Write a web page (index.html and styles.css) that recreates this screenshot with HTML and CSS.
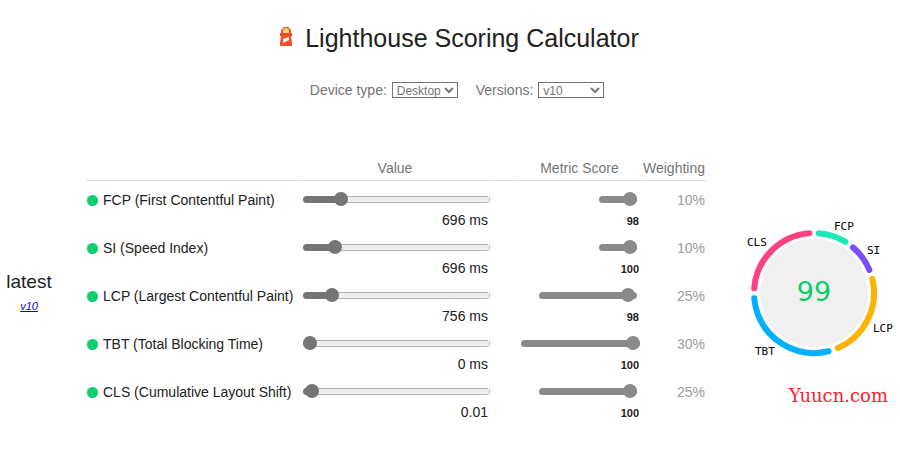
FILE: index.html
```
<!DOCTYPE html>
<html lang="en">

<head>
    <meta charset="UTF-8">
    <meta name="viewport" content="width=device-width, initial-scale=1.0">
    <title>Lighthouse Scoring Calculator</title>
    <link rel="stylesheet" href="styles.css">
</head>

<body>
    <header class="header">
        <svg class="logo" viewBox="0 0 14 20" aria-hidden="true">
            <path fill="#f4512c" d="M2 7V4l3-3h4l3 3v3h1v3h-1l1 7v3H1v-3l1-7H1V7z" />
            <path fill="#f8d66d" d="M4 7V5a3 3 0 0 1 6 0v2z" />
            <path fill="#fff" d="M4 13l6-2v3l-6 3z" />
            <path fill="#d93f22" d="M1 8h12v1H1z" />
        </svg>
        <h1 class="title">Lighthouse Scoring Calculator</h1>
    </header>

    <form class="controls">
        <label>Device type:
            <select class="select" name="device">
                <option>Mobile</option>
                <option selected>Desktop</option>
            </select>
        </label>
        <label>Versions:
            <select class="select" name="version">
                <option selected>v10</option>
                <option>v8</option>
                <option>v6</option>
            </select>
        </label>
    </form>

    <main class="main">
        <section class="version">
            <h2 class="version-title">latest</h2>
            <a class="version-link" href="#v10">v10</a>
        </section>

        <table class="metrics">
            <thead>
                <tr>
                    <th class="col-name"></th>
                    <th class="col-value">Value</th>
                    <th class="col-gap"></th>
                    <th class="col-score">Metric Score</th>
                    <th class="col-weight">Weighting</th>
                </tr>
            </thead>
            <tbody>
                <tr>
                    <td><span class="dot"></span><label for="fcp">FCP (First Contentful Paint)</label></td>
                    <td>
                        <input class="range" style="--fill: 20%" type="range" id="fcp" min="0" max="1000" value="177">
                        <output class="value" for="fcp">696 ms</output>
                    </td>
                    <td></td>
                    <td class="score">
                        <input class="range small" type="range" aria-label="FCP score" value="98" disabled>
                        <output class="score-value">98</output>
                    </td>
                    <td class="weight">10%</td>
                </tr>
                <tr>
                    <td><span class="dot"></span><label for="si">SI (Speed Index)</label></td>
                    <td>
                        <input class="range" style="--fill: 17%" type="range" id="si" min="0" max="1000" value="142">
                        <output class="value" for="si">696 ms</output>
                    </td>
                    <td></td>
                    <td class="score">
                        <input class="range small" type="range" aria-label="SI score" value="100" disabled>
                        <output class="score-value">100</output>
                    </td>
                    <td class="weight">10%</td>
                </tr>
                <tr>
                    <td><span class="dot"></span><label for="lcp">LCP (Largest Contentful Paint)</label></td>
                    <td>
                        <input class="range" style="--fill: 16%" type="range" id="lcp" min="0" max="1000" value="127">
                        <output class="value" for="lcp">756 ms</output>
                    </td>
                    <td></td>
                    <td class="score">
                        <input class="range medium" type="range" aria-label="LCP score" value="98" disabled>
                        <output class="score-value">98</output>
                    </td>
                    <td class="weight">25%</td>
                </tr>
                <tr>
                    <td><span class="dot"></span><label for="tbt">TBT (Total Blocking Time)</label></td>
                    <td>
                        <input class="range" style="--fill: 3%" type="range" id="tbt" min="0" max="1000" value="0">
                        <output class="value" for="tbt">0 ms</output>
                    </td>
                    <td></td>
                    <td class="score">
                        <input class="range large" type="range" aria-label="TBT score" value="100" disabled>
                        <output class="score-value">100</output>
                    </td>
                    <td class="weight">30%</td>
                </tr>
                <tr>
                    <td><span class="dot"></span><label for="cls">CLS (Cumulative Layout Shift)</label></td>
                    <td>
                        <input class="range" style="--fill: 4%" type="range" id="cls" min="0" max="1000" value="13">
                        <output class="value" for="cls">0.01</output>
                    </td>
                    <td></td>
                    <td class="score">
                        <input class="range medium" type="range" aria-label="CLS score" value="100" disabled>
                        <output class="score-value">100</output>
                    </td>
                    <td class="weight">25%</td>
                </tr>
            </tbody>
        </table>

        <!-- arcs are drawn in degrees: dash length is the arc, rotate is its start -->
        <svg class="gauge" viewBox="-74 -74 160 148" role="img" aria-label="Score 99">
            <circle r="54" fill="#f0f0f0" />
            <g class="arcs">
                <circle r="60" pathLength="360" stroke="#1de9b6" stroke-dasharray="27 333" transform="rotate(-85.5)" />
                <circle r="60" pathLength="360" stroke="#7c4dff" stroke-dasharray="27 333" transform="rotate(-49.5)" />
                <circle r="60" pathLength="360" stroke="#ffb300" stroke-dasharray="80 280" transform="rotate(-13.5)" />
                <circle r="60" pathLength="360" stroke="#00b0ff" stroke-dasharray="99 261" transform="rotate(76)" />
                <circle r="60" pathLength="360" stroke="#ff4081" stroke-dasharray="81 279" transform="rotate(184.5)" />
            </g>
            <text class="arc-label" x="20" y="-63">FCP</text>
            <text class="arc-label" x="53" y="-39">SI</text>
            <text class="arc-label" x="59" y="39">LCP</text>
            <text class="arc-label" x="-59" y="62">TBT</text>
            <text class="arc-label" x="-67" y="-47">CLS</text>
            <text class="total" x="0" y="8">99</text>
        </svg>
    </main>

    <div class="watermark">Yuucn.com</div>
</body>

</html>
```

FILE: styles.css
```
body {
    margin: 0;
    font-family: "Liberation Sans", Arial, sans-serif;
    font-size: 14px;
    line-height: 16px;
    color: #212121;
    background-color: #fff;
}

.header {
    display: flex;
    justify-content: center;
    align-items: center;
    gap: 12px;
    padding: 22px 0 0 18px;
}

.logo {
    width: 14px;
    height: 20px;
    margin-bottom: 4px;
}

.title {
    margin: 0;
    font-size: 25px;
    line-height: 32px;
    font-weight: normal;
}

.controls {
    display: flex;
    justify-content: center;
    gap: 18px;
    padding: 28px 0 0 14px;
    color: #757575;
}

.select {
    width: 66px;
    height: 16px;
    margin: 0 0 0 1px;
    padding: 0;
    border: 1px solid #757575;
    border-radius: 0;
    background-color: #fff;
    color: #757575;
    font-family: inherit;
    font-size: 12px;
    line-height: 14px;
    vertical-align: top;
}

.main {
    display: flex;
    align-items: center;
    margin-top: 58px;
}

.version {
    width: 58px;
    margin-right: 27px;
    padding-top: 6px;
    text-align: center;
}

.version-title {
    margin: 0 0 5px;
    font-size: 19px;
    line-height: 22px;
    font-weight: normal;
}

.version-link {
    display: block;
    font-size: 11px;
    font-style: italic;
    color: #0000ee;
}

.metrics {
    border-spacing: 1px;
}

.metrics th {
    height: 21px;
    padding: 0 0 2px;
    border-bottom: 1px solid #e0e0e0;
    font-weight: normal;
    color: #757575;
}

.metrics td {
    height: 37px;
    padding: 10px 0 0;
    vertical-align: top;
    white-space: nowrap;
}

.col-name {
    width: 213px;
}

.col-value {
    width: 189px;
}

.col-gap {
    width: 27px;
}

.col-score {
    width: 121px;
}

.col-weight {
    width: 66px;
}

.dot {
    display: inline-block;
    width: 11px;
    height: 11px;
    margin: 0 5px 0 1px;
    border-radius: 50%;
    background-color: #0cce6b;
    vertical-align: -1px;
}

.range {
    --color: #757575;
    --border: #b2b2b2;
    -webkit-appearance: none;
    appearance: none;
    display: block;
    width: 187px;
    height: 14px;
    margin: 0 0 0 3px;
    background: none;
}

.range::-webkit-slider-runnable-track {
    height: 7px;
    border-radius: 4px;
    background:
        linear-gradient(var(--color), var(--color)) left / var(--fill, 100%) 100% no-repeat,
        linear-gradient(#efefef, #efefef) center / calc(100% - 2px) 5px no-repeat,
        var(--border);
}

.range::-webkit-slider-thumb {
    -webkit-appearance: none;
    width: 14px;
    height: 14px;
    margin-top: -4px;
    border-radius: 50%;
    background-color: var(--color);
}

.range:disabled {
    --color: #8a8a8a;
    --border: #8a8a8a;
    margin: 0 3px 0 auto;
}

.small {
    width: 38px;
}

.medium {
    width: 98px;
}

.large:disabled {
    width: 119px;
    margin-right: 0;
}

.value {
    display: block;
    margin: 6px 2px 0 0;
    text-align: right;
}

.score-value {
    display: block;
    margin: 7px 1px 0 0;
    font-size: 11px;
    font-weight: bold;
    text-align: right;
}

.metrics .weight {
    padding-right: 2px;
    text-align: right;
    color: #9e9e9e;
}

.gauge {
    width: 160px;
    height: 148px;
    margin-left: auto;
    padding-top: 7px;
}

.arcs {
    fill: none;
    stroke-width: 6px;
    stroke-linecap: round;
}

.arc-label {
    font-family: "DejaVu Sans Mono", monospace;
    font-size: 11px;
    fill: #000;
}

.total {
    font-family: "DejaVu Sans", sans-serif;
    font-size: 27px;
    text-anchor: middle;
    fill: #0cce6b;
}

.watermark {
    position: absolute;
    right: 12px;
    bottom: 44px;
    font-family: "DejaVu Serif", serif;
    font-size: 18px;
    line-height: 20px;
    color: #ff1a2e;
}
```
